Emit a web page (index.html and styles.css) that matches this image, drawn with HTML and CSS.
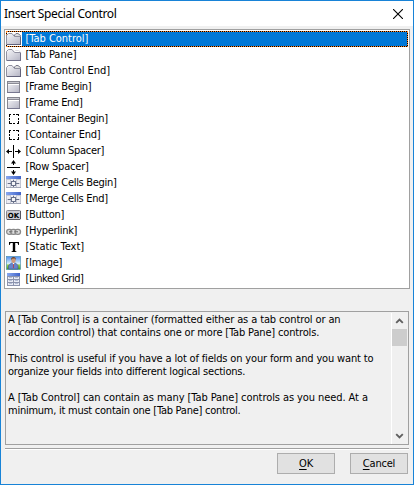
FILE: index.html
```
<!DOCTYPE html>
<html lang="en">
<head>
<meta charset="utf-8">
<title>Insert Special Control</title>
<link rel="stylesheet" href="styles.css">
</head>
<body>
<svg width="0" height="0" class="defs" aria-hidden="true">
  <defs>
    <linearGradient id="metal" x1="0" y1="0" x2="1" y2="1"><stop offset="0" stop-color="#f8f8fa"/><stop offset="1" stop-color="#b4b4c4"/></linearGradient>
    <linearGradient id="blue" x1="0" y1="0" x2="1" y2="0"><stop offset="0" stop-color="#88a8f0"/><stop offset="1" stop-color="#3f62c8"/></linearGradient>
    <linearGradient id="sky" x1="0" y1="0" x2="0" y2="1"><stop offset="0" stop-color="#4f8cf0"/><stop offset=".55" stop-color="#d8f0fa"/><stop offset=".65" stop-color="#9cd850"/><stop offset="1" stop-color="#3c9a18"/></linearGradient>
    <symbol id="tabs" viewBox="0 0 16 16">
      <path d="M8.500 5.500V4L10 2.500H12L14.500 4.500V6" fill="#ddd" stroke="#77778a"/>
      <path d="M.5 13.500V4.500L2.500 2.500H6L8.500 5.500H14.500V13.500Z" fill="url(#metal)" stroke="#9090a0"/>
      <path d="M1 13.500H15M14.500 6V13" stroke="#62627a"/>
    </symbol>
    <symbol id="pane" viewBox="0 0 16 16">
      <path d="M8.500 4.500L9.500 3.500H12.500L14.500 5" fill="none" stroke="#dedee4"/>
      <path d="M.5 13.500V4.500L2.500 2.500H6L8.500 5.500H14.500V13.500Z" fill="url(#metal)" stroke="#9292a2"/>
      <path d="M1 13.500H15M14.500 6V13" stroke="#70708a"/>
    </symbol>
    <symbol id="frame" viewBox="0 0 16 16" shape-rendering="crispEdges">
      <rect x="1.500" y="2.500" width="12" height="11" fill="url(#metal)" stroke="#85858f"/>
      <path d="M2 3.500H13" stroke="#c9c9d0"/><path d="M2 4.500H13" stroke="#8c8c96"/><path d="M2 5.500H13" stroke="#fff"/>
      <path d="M1 13.500H14" stroke="#777790"/>
    </symbol>
    <symbol id="container" viewBox="0 0 16 16" shape-rendering="crispEdges">
      <path d="M3 3.500H5M7 3.500H9M10 3.500H13M3 12.500H6M7 12.500H9M11 12.500H13M3.500 3V6M3.500 7V9M3.500 10V13M12.500 3V5M12.500 7V9M12.500 10V13" stroke="#000" fill="none"/>
    </symbol>
    <symbol id="column" viewBox="0 0 16 16">
      <path d="M7.500 2V15M1 8.500H6M9 8.500H14" stroke="#000"/><path d="M0 8.500L3 6V11ZM15 8.500L12 6V11Z"/>
    </symbol>
    <symbol id="row" viewBox="0 0 16 16">
      <path d="M1 8.500H14M7.500 3V6M7.500 11V14" stroke="#000"/><path d="M7.500 1L10 4.500H5ZM7.500 16L10 12.500H5Z"/>
    </symbol>
    <symbol id="merge" viewBox="0 0 16 16" shape-rendering="crispEdges">
      <path d="M0 1H15V13H0Z" fill="#c3c7d4"/><path d="M0 1H15V4H0Z" fill="url(#blue)"/>
      <path d="M1 5H4V8H1ZM5 4H7V6H5ZM8 4H10V6H8ZM11 5H14V8H11ZM1 9H4V12H1ZM5 11H7V12H5ZM8 11H10V12H8ZM11 9H14V12H11Z" fill="#ececf2"/>
      <path d="M5.500 6.500H9.500V10.500H5.500ZM2 8.500H5M10 8.500H13M7.500 5V6M7.500 11V12" fill="#f5f5f8" stroke="#68718a"/>
      <path d="M0 12.500H15" stroke="#a2a7b8"/>
    </symbol>
    <symbol id="button" viewBox="0 0 16 16">
      <rect x=".5" y="3.500" width="14" height="9" rx="1" fill="#cbcbd4" stroke="#85858f"/><path d="M1 12.500H14M14.500 4V12" stroke="#55555f"/>
      <text x="7.400" y="11" class="ok">OK</text>
    </symbol>
    <symbol id="link" viewBox="0 0 16 16">
      <g fill="#ddd" stroke="#8a8a8a" stroke-width="1.300"><rect x=".7" y="6.300" width="5.500" height="5" rx="2.300"/><rect x="4.800" y="6.300" width="5.500" height="5" rx="2.300"/><rect x="9" y="6.300" width="5.500" height="5" rx="2.300"/></g>
      <path d="M3 8.800H6.500M8.500 8.800H12" stroke="#666"/>
    </symbol>
    <symbol id="text" viewBox="0 0 16 16">
      <path d="M3 3H13V6H12.300L11.500 4H9.200V12L10.500 12.500V13H5.500V12.500L6.800 12V4H4.500L3.700 6H3Z" fill="#000"/>
    </symbol>
    <symbol id="image" viewBox="0 0 16 16">
      <rect x=".5" y="1.500" width="14" height="13" fill="url(#sky)" stroke="#3c88b0" stroke-width=".6"/>
      <path d="M2.500 14V10.500L5.500 8H9.500L12 10.500V14Z" fill="#6684c8" stroke="#3d5796" stroke-width=".6"/>
      <path d="M6.300 7.500L7.500 10L8.700 7.500Z" fill="#fff"/><path d="M7.500 9V13" stroke="#b33949" stroke-width=".8"/>
      <ellipse cx="7.500" cy="5.300" rx="2.100" ry="2.700" fill="#d09a78"/><path d="M5 5Q5 2 7.500 2T10 5L9 3.500H6.500Z" fill="#69432f"/>
    </symbol>
    <symbol id="grid" viewBox="0 0 16 16" shape-rendering="crispEdges">
      <path d="M1 2H14V15H1Z" fill="#8c94ae"/><path d="M1 2H14V5H1Z" fill="url(#blue)"/>
      <path d="M2 6H7V8H2ZM8 6H13V8H8ZM2 9H7V11H2ZM8 9H13V11H8ZM2 12H7V14H2ZM8 12H13V14H8Z" fill="#e8ebf4"/>
      <path d="M3 6.500H6M9 6.500H12M3 9.500H6M9 9.500H12M3 12.500H6M9 12.500H12" stroke="#b4bdd4"/>
    </symbol>
  </defs>
</svg>
<main class="window">
  <header class="titlebar"><h1>Insert Special Control</h1>
    <svg class="close" viewBox="0 0 10 10"><path d="M0 0L10 10M10 0L0 10" stroke="#000" stroke-width="1.100"/></svg>
  </header>
  <ul class="list">
    <li class="selected wide"><svg><use href="#tabs"/></svg><span>[Tab Control]</span></li>
    <li class="wide"><svg><use href="#pane"/></svg><span>[Tab Pane]</span></li>
    <li class="wide"><svg><use href="#tabs"/></svg><span>[Tab Control End]</span></li>
    <li><svg><use href="#frame"/></svg><span>[Frame Begin]</span></li>
    <li><svg><use href="#frame"/></svg><span>[Frame End]</span></li>
    <li><svg><use href="#container"/></svg><span>[Container Begin]</span></li>
    <li class="medium"><svg><use href="#container"/></svg><span>[Container End]</span></li>
    <li><svg><use href="#column"/></svg><span>[Column Spacer]</span></li>
    <li class="medium"><svg><use href="#row"/></svg><span>[Row Spacer]</span></li>
    <li><svg><use href="#merge"/></svg><span>[Merge Cells Begin]</span></li>
    <li><svg><use href="#merge"/></svg><span>[Merge Cells End]</span></li>
    <li><svg><use href="#button"/></svg><span>[Button]</span></li>
    <li><svg><use href="#link"/></svg><span>[Hyperlink]</span></li>
    <li class="wide"><svg><use href="#text"/></svg><span>[Static Text]</span></li>
    <li><svg><use href="#image"/></svg><span>[Image]</span></li>
    <li class="narrow"><svg><use href="#grid"/></svg><span>[Linked Grid]</span></li>
  </ul>
  <section class="help">
    <div class="copy">
      <p><span class="loose">A [Tab Control] is a container (formatted either as a tab control or an</span><br>accordion control) that contains one or more [Tab Pane] controls.</p>
      <p>This control is useful if you have a lot of fields on your form and you want to<br><span class="snug">organize your fields into different logical sections.</span></p>
      <p><span class="looser">A [Tab Control] can contain as many [Tab Pane] controls as you need. At a</span><br><span class="tight">minimum, it must contain one [Tab Pane] control.</span></p>
    </div>
    <div class="scrollbar">
      <svg viewBox="0 0 15 17"><path d="M4 10.500L7.500 7L11 10.500" fill="none" stroke="#606060" stroke-width="2"/></svg>
      <div class="thumb"></div>
      <svg class="down" viewBox="0 0 15 17"><path d="M4 6.500L7.500 10L11 6.500" fill="none" stroke="#606060" stroke-width="2"/></svg>
    </div>
  </section>
  <footer class="actions"><button><span><u>O</u>K</span></button><button><span><u>C</u>ancel</span></button></footer>
</main>
</body>
</html>
```
FILE: styles.css
```
* { box-sizing: border-box; }
body { margin: 0; font: 11px/13px "DejaVu Sans Condensed", "DejaVu Sans", sans-serif; font-stretch: condensed; color: #000; }
.defs { position: absolute; }
.window { width: 414px; height: 485px; border: 1px solid #1883d7; background: #f0f0f0; display: flex; flex-direction: column; }
.titlebar { height: 25px; flex: none; background: #fff; display: flex; align-items: center; justify-content: space-between; padding: 0 10px 0 3px; }
h1 { margin: 0; font: 12px/24px "Noto Sans", sans-serif; letter-spacing: -.37px; }
.close { width: 10px; height: 10px; }
.list { list-style: none; margin: 3px 3px 0; padding: 1px; height: 260px; flex: none; border: 1px solid #a0a0a0; background: #fff; }
.list li { height: 16px; display: flex; align-items: center; }
.list svg { width: 16px; height: 16px; flex: none; }
.list span { margin-left: 3.5px; line-height: 16px; letter-spacing: -.3px; }
.list .wide span { letter-spacing: -.03px; }
.list .medium span { letter-spacing: -.2px; }
.list .narrow span { letter-spacing: -.45px; }
.list .selected { color: #fff; border: 1px dotted #ff8728; background: linear-gradient(90deg, #fff 15px, #0078d7 15px) padding-box, linear-gradient(#000, #000) border-box; }
.selected svg { margin-left: -1px; }
.ok { font: bold 7px "DejaVu Sans", sans-serif; text-anchor: middle; }
.help { margin: 22px 4px 0; height: 134px; flex: none; border: 1px solid #a0a0a0; display: flex; justify-content: space-between; }
.copy { padding: 1px 0 0 2px; white-space: nowrap; letter-spacing: -.16px; }
.copy p { margin: 0 0 13px; }
.loose { letter-spacing: -.12px; }
.looser { letter-spacing: -.08px; }
.snug { letter-spacing: -.19px; }
.tight { letter-spacing: -.25px; }
.scrollbar { width: 17px; margin-top: 1px; border-left: 1px solid #fff; padding-right: 1px; display: flex; flex-direction: column; }
.scrollbar svg { width: 15px; height: 16px; }
.thumb { height: 17px; background: #cdcdcd; }
.scrollbar .down { margin-top: auto; }
.actions { margin: 3px 4px 0; padding: 4px 1px 0 0; border-top: 1px solid #a0a0a0; box-shadow: inset 0 1px #fff; display: flex; justify-content: flex-end; gap: 15px; }
button { width: 58px; height: 21px; padding: 0; border: 1px solid #adadad; background: #e1e1e1; font: inherit; letter-spacing: -.2px; color: #000; }
u { text-underline-offset: 2px; }
```
